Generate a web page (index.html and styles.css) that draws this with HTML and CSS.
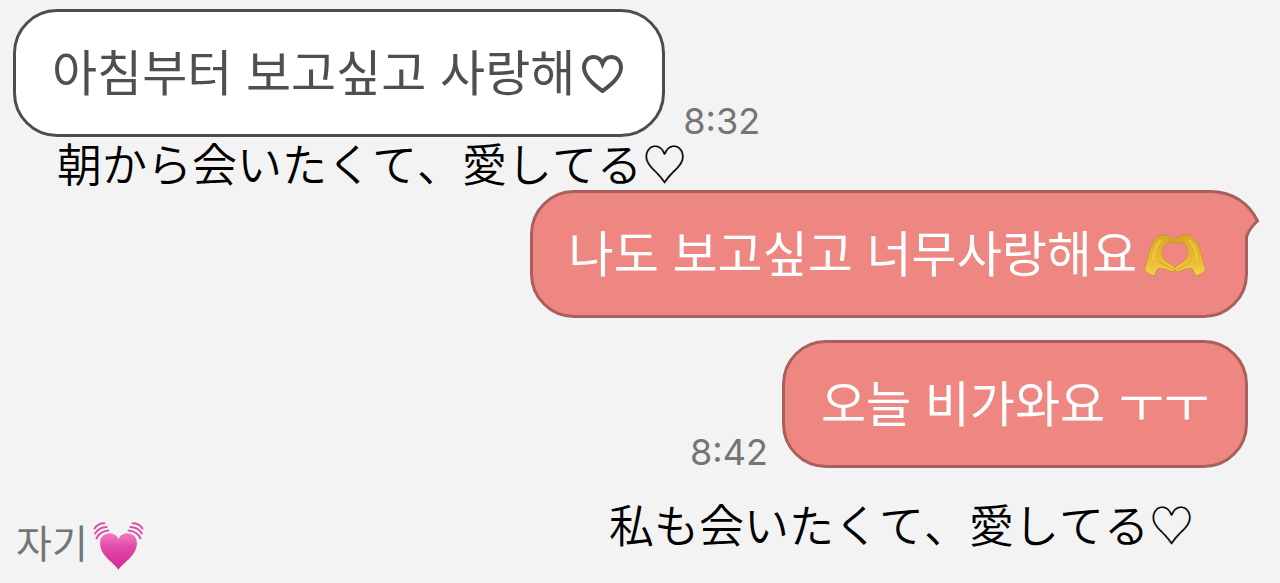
FILE: index.html
```html
<!DOCTYPE html>
<html lang="ko">
<head>
    <meta charset="UTF-8">
    <meta name="viewport" content="width=device-width, initial-scale=1.0">
    <title>Chat</title>
    <link rel="stylesheet" href="styles.css">
</head>
<body>
    <main class="chat">
        <div class="message received">
            <p class="bubble">아침부터 보고싶고 사랑해<svg class="heart" viewBox="0 0 41 38" role="img" aria-label="♡">
                    <path d="M20.500 36C12 30 2 22 2 12.500C2 6.500 6 2 11.500 2C15.500 2 19 4.500 20.500 8.500C22 4.500 25.500 2 29.500 2C35 2 39 6.500 39 12.500C39 22 29 30 20.500 36Z"/>
                </svg></p>
            <time>8:32</time>
        </div>
        <p class="translation" lang="ja">朝から会いたくて、愛してる♡</p>

        <div class="message sent">
            <p class="bubble">나도 보고싶고 너무사랑해요<svg class="hands" viewBox="10 24 189 130" role="img" aria-label="🫶">
                    <defs>
                        <linearGradient id="skin" x1="0" y1="0" x2="0" y2="1">
                            <stop offset="0" stop-color="#dca824"/>
                            <stop offset="0.600" stop-color="#e8ba30"/>
                            <stop offset="1" stop-color="#f6d24e"/>
                        </linearGradient>
                        <g id="hand">
                            <path fill="url(#skin)" stroke="#c08a26" stroke-width="2" d="M11 134L20 102C24 80 30 62 38 47C46 33 58 26 74 27C90 27 100 34 105 46C104 54 98 55 92 49C84 45 77 50 72 58C64 70 63 87 70 98C78 110 92 115 102 122C108 128 105 136 98 137C90 138 82 132 72 130C62 127 54 127 49 133L42 151Q24 148 11 134Z"/>
                            <path fill="none" stroke="#b67d22" stroke-width="3" stroke-linecap="round" opacity="0.500" d="M56 106Q66 118 98 130M84 38Q94 40 99 49"/>
                            <path fill="none" stroke="#f7d65a" stroke-width="8" stroke-linecap="round" opacity="0.500" d="M38 100Q40 66 60 44"/>
                        </g>
                    </defs>
                    <use href="#hand"/>
                    <use href="#hand" transform="translate(209 0) scale(-1 1)"/>
                </svg></p>
            <svg class="tail" viewBox="0 0 62 60" aria-hidden="true">
                <path class="tail-fill" d="M0 2H10C32 2 50 14 58 31C52 37 48 42 46 48V60H0Z"/>
                <path class="tail-line" d="M0 1.500H10C32 1.500 49 13 57.500 31C52 36 48 42 46.500 47V60"/>
            </svg>
        </div>

        <div class="message sent">
            <time>8:42</time>
            <p class="bubble">오늘 비가와요 ㅜㅜ</p>
        </div>

        <footer class="bottom">
            <p class="name">자기<svg class="beating" viewBox="278 64 154 146" role="img" aria-label="💓">
                    <defs>
                        <linearGradient id="pink" x1="0" y1="0" x2="0" y2="1">
                            <stop offset="0" stop-color="#f07cc0"/>
                            <stop offset="0.400" stop-color="#e148a8"/>
                            <stop offset="1" stop-color="#d4269a"/>
                        </linearGradient>
                    </defs>
                    <path fill="url(#pink)" d="M355 209C338 186 299 166 299 129C299 109 311 98 328 98C342 98 351 106 355 116C359 106 368 98 382 98C399 98 411 109 411 129C411 166 372 186 355 209Z"/>
                    <g fill="none" stroke="#dc4fab" stroke-width="6" stroke-linecap="round">
                        <path d="M282 84Q292 68 312 68M284 99Q294 80 319 79M288 114Q298 93 324 90"/>
                        <path d="M428 84Q418 68 398 68M426 99Q416 80 391 79M422 114Q412 93 386 90"/>
                    </g>
                </svg></p>
            <p class="translation" lang="ja">私も会いたくて、愛してる♡</p>
        </footer>
    </main>
</body>
</html>
```
FILE: styles.css
```css
* {
    box-sizing: border-box;
}

body {
    margin: 0;
    background-color: #f3f3f3;
    color: #000;
    font-family: "Noto Sans CJK KR", sans-serif;
}

p {
    margin: 0;
}

.chat {
    padding: 9px 32px 0 13px;
}

.message {
    display: flex;
    align-items: flex-end;
    position: relative;
}

.sent {
    justify-content: flex-end;
    margin-bottom: 22px;
}

.bubble {
    display: flex;
    align-items: center;
    padding: 21px 36px 27px;
    border: 3px solid #4d4d4d;
    border-radius: 44px;
    background-color: #fff;
    color: #4f4f4f;
    font-size: 49px;
    line-height: 74px;
    white-space: nowrap;
}

.sent .bubble {
    border-color: #a85f5e;
    background-color: #ee8781;
    color: #fff;
}

.heart {
    width: 41px;
    height: 38px;
    margin: 8px 3px 0 7px;
    fill: none;
    stroke: #4f4f4f;
    stroke-width: 4;
}

.hands {
    width: 62px;
    height: 43px;
    margin: 8px 3px 0 7px;
}

.tail {
    position: absolute;
    top: 0;
    right: -14px;
    width: 62px;
    height: 60px;
}

.tail-fill {
    fill: #ee8781;
}

.tail-line {
    fill: none;
    stroke: #a85f5e;
    stroke-width: 3;
}

time {
    margin: 0 18px;
    color: #757575;
    font-family: Inter, sans-serif;
    font-size: 36px;
    line-height: 32px;
}

.sent time {
    margin-right: 14px;
}

.translation {
    padding-left: 44px;
    font-family: "Noto Sans CJK JP", sans-serif;
    font-size: 45px;
    font-weight: 350;
    font-kerning: none;
    line-height: 51px;
    padding-bottom: 2px;
}

.bottom {
    display: flex;
    justify-content: space-between;
    margin-top: 30px;
    padding-right: 54px;
}

.name {
    display: flex;
    align-items: center;
    padding-top: 14px;
    padding-left: 3px;
    color: #757575;
    font-size: 39px;
    line-height: 50px;
}

.beating {
    width: 51px;
    height: 48px;
    margin-top: 10px;
    margin-left: 5px;
}
```
